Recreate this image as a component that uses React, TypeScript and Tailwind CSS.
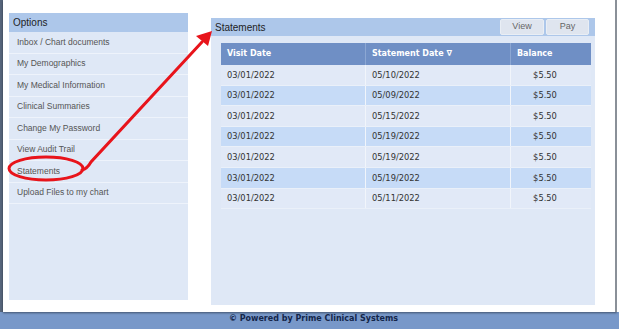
const menuItems = [
  "Inbox / Chart documents",
  "My Demographics",
  "My Medical Information",
  "Clinical Summaries",
  "Change My Password",
  "View Audit Trail",
  "Statements",
  "Upload Files to my chart",
];

const statements = [
  { visit: "03/01/2022", stmt: "05/10/2022", balance: "$5.50" },
  { visit: "03/01/2022", stmt: "05/09/2022", balance: "$5.50" },
  { visit: "03/01/2022", stmt: "05/15/2022", balance: "$5.50" },
  { visit: "03/01/2022", stmt: "05/19/2022", balance: "$5.50" },
  { visit: "03/01/2022", stmt: "05/19/2022", balance: "$5.50" },
  { visit: "03/01/2022", stmt: "05/19/2022", balance: "$5.50" },
  { visit: "03/01/2022", stmt: "05/11/2022", balance: "$5.50" },
];

export default function App() {
  return (
    <div className="relative w-[619px] h-[329px] overflow-hidden bg-white font-['Liberation_Sans',Arial,sans-serif]">
      <div className="flex h-[312px]">
        {/* left dark edge */}
        <div className="w-[3px] bg-[#56657b]" />

        <div className="flex-1 flex bg-white border-r-2 border-[#8a9098] shadow-[0_1px_2px_rgba(0,0,0,0.45)] pl-[6px]">
          {/* Options panel */}
          <div className="mt-[13px] w-[179px] h-[287px] bg-[#dfe8f6] flex flex-col">
            <div className="h-[19px] bg-[#adc7ea] flex items-center pl-[4px] text-[10px] text-[#1e1e1e]">
              Options
            </div>
            {menuItems.map((item) => (
              <div
                key={item}
                className="h-[21.5px] flex items-center pl-[8px] border-b border-[#eef3fb] text-[8.5px] text-[#555]"
              >
                {item}
              </div>
            ))}
          </div>

          {/* Statements panel */}
          <div className="ml-[23px] mt-[18px] w-[384px] h-[287px] bg-[#dfe8f6] flex flex-col">
            <div className="h-[18px] bg-[#adc7ea] flex items-center justify-between pl-[4px] pr-[6px]">
              <span className="text-[10px] text-[#1e1e1e]">Statements</span>
              <div className="flex gap-[2px]">
                <div className="w-[44px] h-[16px] rounded-[2px] bg-[#dfe5ef] border border-[#e9eef5] flex items-center justify-center text-[9px] text-[#666]">
                  View
                </div>
                <div className="w-[43px] h-[16px] rounded-[2px] bg-[#dfe5ef] border border-[#e9eef5] flex items-center justify-center text-[9px] text-[#666]">
                  Pay
                </div>
              </div>
            </div>

            <div className="mt-[7px] ml-[10px] w-[370px] font-['DejaVu_Sans',Verdana,sans-serif]">
              <div className="flex h-[22px] bg-[#6f8fc5] text-white font-bold text-[8px]">
                <div className="w-[145px] flex items-center pl-[6px] border-r border-[#8ca7d3]">Visit Date</div>
                <div className="w-[145px] flex items-center pl-[6px] border-r border-[#8ca7d3]">Statement Date ∇</div>
                <div className="flex-1 flex items-center pl-[6px]">Balance</div>
              </div>
              {statements.map((row, i) => (
                <div
                  key={i}
                  className={`flex h-[20.6px] text-[8.3px] text-[#333] border-b border-[#eaf0f9] ${
                    i % 2 === 1 ? "bg-[#c6dbf7]" : "bg-[#e1e9f7]"
                  }`}
                >
                  <div className="w-[145px] flex items-center pl-[6px] border-r border-[#f1f5fb]">{row.visit}</div>
                  <div className="w-[145px] flex items-center pl-[6px] border-r border-[#f1f5fb]">{row.stmt}</div>
                  <div className="flex-1 flex items-center justify-center pr-[12px]">{row.balance}</div>
                </div>
              ))}
            </div>
          </div>
        </div>
        <div className="w-[2px] bg-white" />
      </div>

      <div className="h-[17px] bg-[#7898c9] flex items-start justify-center pt-[1px]">
        <span className="text-[8px] font-bold text-[#14264a] font-['DejaVu_Sans',Verdana,sans-serif] pl-[8px]">
          © Powered by Prime Clinical Systems
        </span>
      </div>

      {/* annotation overlay */}
      <svg className="absolute inset-0 pointer-events-none" width="619" height="329" viewBox="0 0 619 329">
        <ellipse cx="46" cy="168.5" rx="37" ry="11.5" fill="none" stroke="#e8141b" strokeWidth="3" />
        <path d="M82 170 Q87 169 91 162 L202 42" fill="none" stroke="#e8141b" strokeWidth="3" strokeLinecap="round" />
        <polygon points="212,31 208,46 196,36" fill="#e8141b" />
      </svg>
    </div>
  );
}
